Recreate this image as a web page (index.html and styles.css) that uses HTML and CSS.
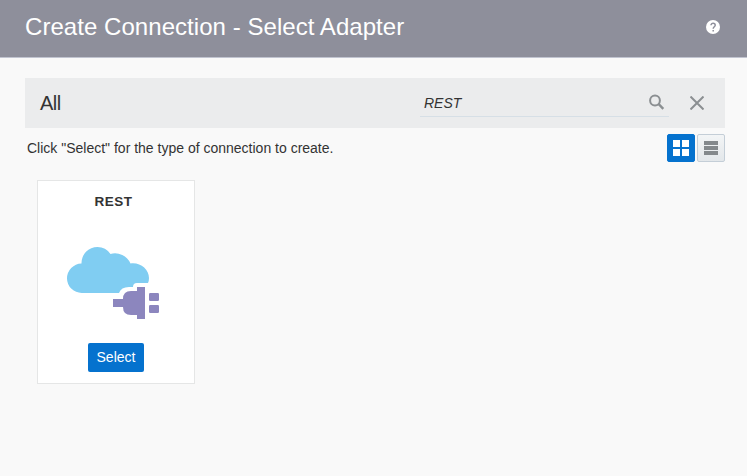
FILE: index.html
```html
<!DOCTYPE html>
<html lang="en">
<head>
<meta charset="utf-8">
<title>Create Connection - Select Adapter</title>
<link rel="stylesheet" href="styles.css">
</head>
<body>
<header class="header">
  <h1 class="title">Create Connection - Select Adapter</h1>
  <svg class="help" width="14" height="14" viewBox="0 0 14 14" role="img" aria-label="Help"><circle cx="7" cy="7" r="7" fill="#fff"/><path d="M5 5.3C5 2.500 9.200 2.600 9.200 5.200C9.200 6.800 7.200 6.800 7.200 8.800M7.200 10v1.600" fill="none" stroke="#8e8f9b" stroke-width="1.500"/></svg>
</header>
<main class="content">
  <div class="searchbar">
    <h2 class="filter">All</h2>
    <div class="search">
      <span class="query">REST</span>
      <svg class="search-icon" width="16" height="17" viewBox="0 0 16 17" fill="none" stroke="#8b8f92"><circle cx="6" cy="6.500" r="4.900" stroke-width="2"/><path d="M9.700 10.200L14.300 14.800" stroke-width="2.400"/></svg>
    </div>
    <svg class="close" width="14" height="14" viewBox="0 0 14 14"><path d="M.5 .5L13.500 13.500M13.500 .5L.5 13.500" stroke="#8b8f92" stroke-width="2"/></svg>
  </div>
  <div class="toolbar">
    <p class="hint">Click "Select" for the type of connection to create.</p>
    <div class="views">
      <button class="view view-active" aria-label="Grid view"><svg width="16" height="16" viewBox="0 0 16 16" fill="#fff"><path d="M0 0h7v7H0zM9 0h7v7H9zM0 9h7v7H0zM9 9h7v7H9z"/></svg></button>
      <button class="view" aria-label="List view"><svg width="14" height="14" viewBox="0 0 14 14" fill="#84898c"><path d="M0 0h14v4H0zM0 5h14v4H0zM0 10h14v4H0z"/></svg></button>
    </div>
  </div>
  <article class="card">
    <h3 class="card-title">REST</h3>
    <svg class="card-icon" width="92" height="72" viewBox="67 247 92 72">
      <path fill="#80cdf2" d="M82 293A14.700 14.700 0 0 1 67 278.500A15 15 0 0 1 81.500 263.500A16 16 0 0 1 97.500 247A16 16 0 0 1 110.500 254A17 17 0 0 1 130.500 263.500C140 262 149 269 149 278Q149 281 148 283H137Q133 283 133 287H129Q121 287 119 293Z"/>
      <path fill="#8c86be" d="M113 299h10Q123 291 131 291H137V287H145V319H137V315H131Q123 315 123 307H113Z"/>
      <rect x="149" y="293" width="10" height="8" rx="1.200" fill="#8c86be"/>
      <rect x="149" y="305" width="10" height="8" rx="1.200" fill="#8c86be"/>
    </svg>
    <button class="select">Select</button>
  </article>
</main>
</body>
</html>
```
FILE: styles.css
```css
* { box-sizing: border-box; }
body { margin: 0; min-height: 476px; background: #f9f9f9; color: #333; font: 14px/18px "Liberation Sans", Arial, sans-serif; }
h1, h2, h3, p { margin: 0; font-weight: normal; }
svg { display: block; flex: none; }
button { border: 0; padding: 0; font: inherit; }
.header { display: flex; align-items: center; justify-content: space-between; height: 58px; padding: 0 27px 3px 25px; background: #8e8f9b; border-bottom: 1px solid #c1c4d0; }
.title { color: #fff; font-size: 24px; line-height: 28px; letter-spacing: .05px; }
.content { padding: 20px 22px 0 25px; }
.searchbar { display: flex; align-items: center; height: 50px; padding: 0 21px 0 15px; background: #ebeced; }
.filter { flex: 1; padding-bottom: 1px; font-size: 20px; line-height: 24px; letter-spacing: -.5px; }
.search { display: flex; align-items: center; justify-content: space-between; width: 249px; height: 28px; margin-right: 21px; padding: 0 4px; border-bottom: 1px solid #d6dfe6; }
.search-icon { margin-bottom: 1px; }
.query { font-style: italic; }
.toolbar { display: flex; justify-content: space-between; padding-top: 6px; }
.hint { padding: 5px 0 0 2px; }
.views { display: flex; gap: 2px; }
.view { display: flex; align-items: center; justify-content: center; width: 28px; height: 28px; border: 1px solid #c4ced7; border-radius: 2px; background: linear-gradient(#f3f5f6, #e3e7ea); }
.view-active { border-color: #0572ce; background: #0572ce; }
.card { display: flex; flex-direction: column; align-items: center; width: 158px; height: 204px; margin: 18px 0 0 12px; padding-top: 12px; background: #fff; border: 1px solid #e5e6e6; }
.card-title { padding-right: 5px; font-size: 13.5px; font-weight: bold; letter-spacing: .5px; }
.card-icon { margin: 36px 6px 0 0; }
.select { width: 56px; height: 29px; margin-top: 24px; padding-bottom: 2px; border-radius: 2px; background: #0572ce; color: #fff; }
```
